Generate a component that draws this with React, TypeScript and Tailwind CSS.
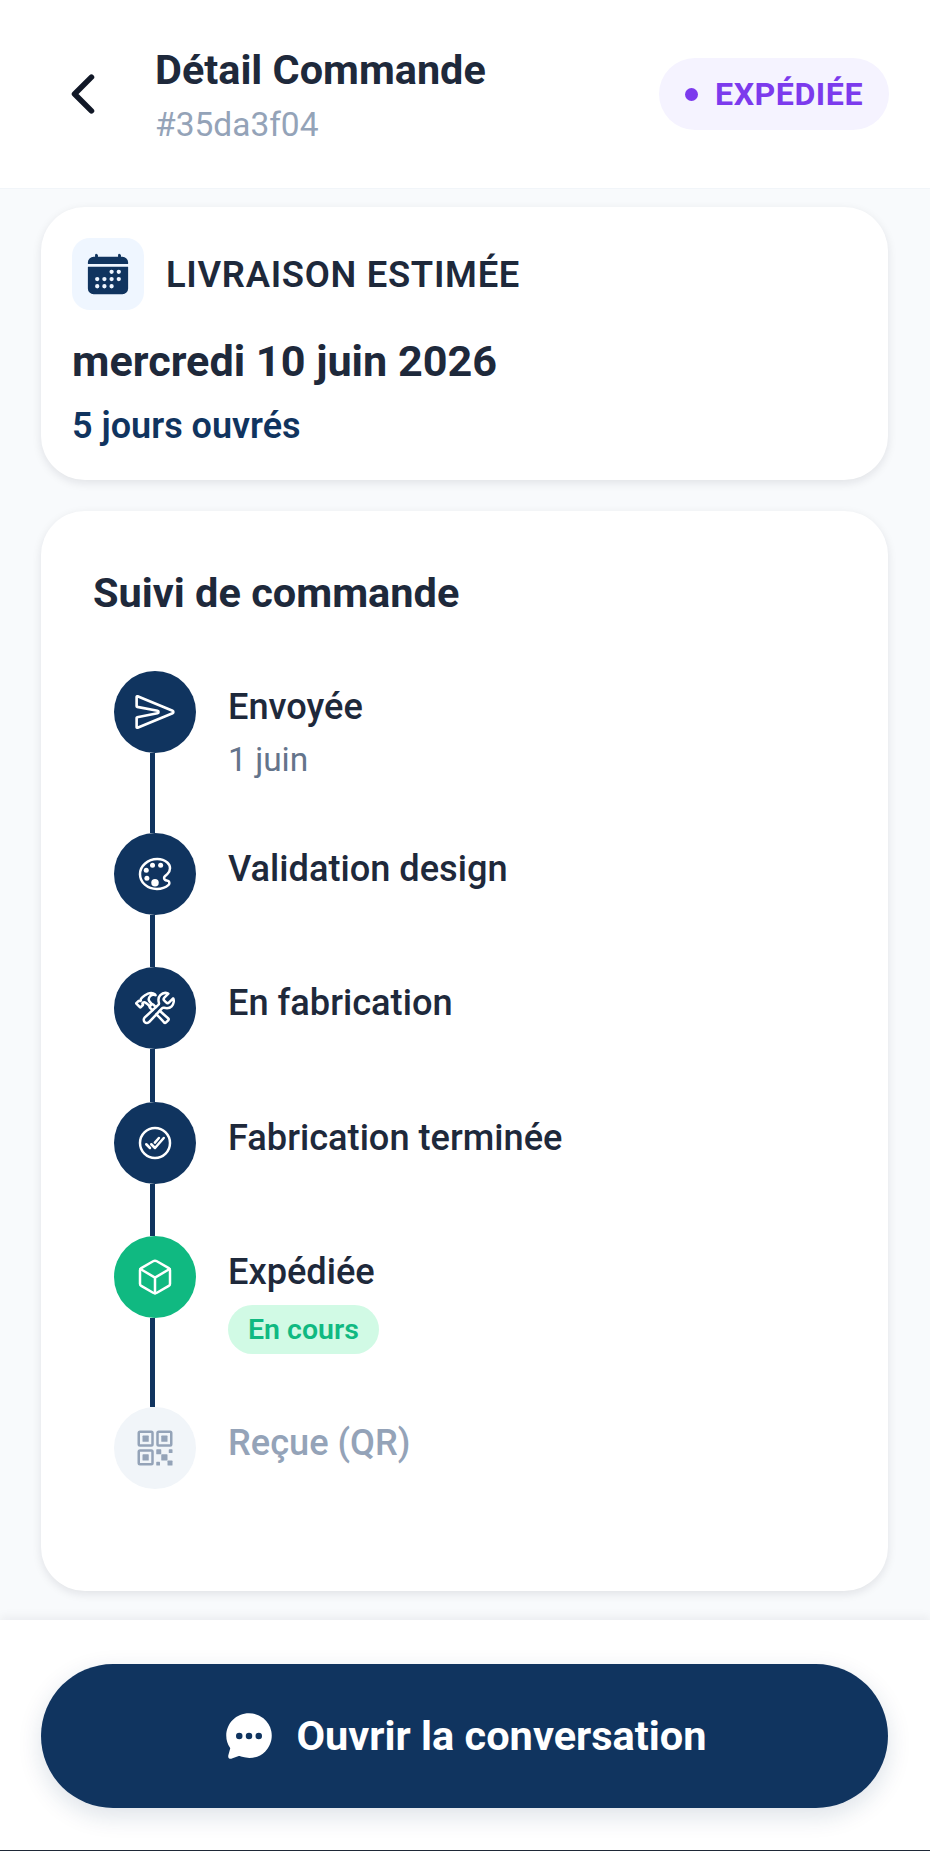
import type { ReactNode } from "react";
import {
  IoCalendar,
  IoChatbubbleEllipses,
  IoCheckmarkDoneCircleOutline,
  IoChevronBack,
  IoColorPaletteOutline,
  IoConstructOutline,
  IoCubeOutline,
  IoQrCodeOutline,
  IoSendOutline,
} from "react-icons/io5";

function Step({
  icon,
  title,
  circle = "bg-[#10345f] text-white",
  titleColor = "text-[#1e293b]",
  last = false,
  height,
  children,
}: {
  icon: ReactNode;
  title: string;
  circle?: string;
  titleColor?: string;
  last?: boolean;
  height: string;
  children?: ReactNode;
}) {
  return (
    <div className={`flex ${height}`}>
      <div className="flex w-[82px] shrink-0 flex-col items-center">
        <div
          className={`flex h-[82px] w-[82px] shrink-0 items-center justify-center rounded-full ${circle}`}
        >
          {icon}
        </div>
        {!last && <div className="mr-[5px] w-[5px] flex-1 bg-[#10345f]" />}
      </div>
      <div className="ml-[32px] pt-[16px]">
        <div className={`text-[36.2px] font-medium leading-[40px] ${titleColor}`}>
          {title}
        </div>
        {children}
      </div>
    </div>
  );
}

export default function App() {
  return (
    <div className="flex h-[1851px] w-[930px] flex-col overflow-hidden bg-[#f8fafc] font-['Roboto',sans-serif]">
      <header className="flex h-[189px] shrink-0 items-center border-b border-[#f1f5f9] bg-white pl-[60px] pr-[41px]">
        <IoChevronBack size={60} className="-ml-[7px] text-[#111827]" />
        <div className="ml-[42px] flex-1 pt-[2px]">
          <div className="text-[41.4px] font-bold leading-[48px] text-[#1e293b]">
            Détail Commande
          </div>
          <div className="mt-[11px] text-[33.5px] leading-[40px] text-[#94a3b8]">
            #35da3f04
          </div>
        </div>
        <div className="flex h-[72px] items-center gap-[17px] rounded-full bg-[#f5f3ff] px-[26px]">
          <span className="h-[13px] w-[13px] rounded-full bg-[#7c3aed]" />
          <span className="text-[32.2px] font-bold tracking-[0.5px] text-[#7c3aed]">
            EXPÉDIÉE
          </span>
        </div>
      </header>

      <main className="flex flex-1 flex-col pl-[41px] pr-[42px] pt-[18px]">
        <section className="h-[273px] rounded-[44px] bg-white px-[31px] pt-[31px] shadow-[0_3px_10px_rgba(15,23,42,0.1)]">
          <div className="flex items-center">
            <div className="flex h-[72px] w-[72px] items-center justify-center rounded-[18px] bg-[#eff6ff]">
              <IoCalendar size={46} className="text-[#10345f]" />
            </div>
            <span className="ml-[22px] pt-[2px] text-[36.4px] font-semibold tracking-[0.7px] text-[#1e293b]">
              LIVRAISON ESTIMÉE
            </span>
          </div>
          <div className="mt-[27px] text-[43.2px] font-bold leading-[50px] text-[#1e293b]">
            mercredi 10 juin 2026
          </div>
          <div className="mt-[19px] text-[36px] font-semibold leading-[40px] text-[#10345f]">
            5 jours ouvrés
          </div>
        </section>

        <section className="mt-[31px] h-[1080px] rounded-[44px] bg-white pl-[73px] pt-[58px] shadow-[0_3px_10px_rgba(15,23,42,0.1)]">
          <h2 className="-ml-[21px] text-[41.5px] font-bold leading-[48px] text-[#1e293b]">
            Suivi de commande
          </h2>
          <div className="mt-[54px]">
            <Step
              height="h-[162px]"
              title="Envoyée"
              icon={<IoSendOutline size={42} />}
            >
              <div className="mt-[13px] text-[33.5px] leading-[40px] text-[#64748b]">
                1 juin
              </div>
            </Step>
            <Step
              height="h-[134px]"
              title="Validation design"
              icon={<IoColorPaletteOutline size={40} />}
            />
            <Step
              height="h-[135px]"
              title="En fabrication"
              icon={<IoConstructOutline size={40} />}
            />
            <Step
              height="h-[134px]"
              title="Fabrication terminée"
              icon={<IoCheckmarkDoneCircleOutline size={40} />}
            />
            <Step
              height="h-[171px]"
              title="Expédiée"
              circle="bg-[#10b981] text-white"
              icon={<IoCubeOutline size={40} />}
            >
              <div className="mt-[13px] inline-flex h-[49px] items-center rounded-full bg-[#d1fae5] px-[20px] pt-[2px] text-[28.5px] font-semibold text-[#10b981]">
                En cours
              </div>
            </Step>
            <Step
              last
              height="h-[82px]"
              title="Reçue (QR)"
              circle="bg-[#f1f5f9] text-[#94a3b8]"
              titleColor="text-[#94a3b8]"
              icon={<IoQrCodeOutline size={40} />}
            />
          </div>
        </section>
      </main>

      <footer className="flex h-[231px] shrink-0 flex-col bg-white pl-[41px] pr-[42px] pt-[44px] shadow-[0_-3px_10px_rgba(15,23,42,0.06)]">
        <button className="flex h-[144px] w-full items-center justify-center gap-[22px] rounded-[72px] bg-[#10345f] text-[41.5px] font-bold text-white shadow-[0_8px_24px_rgba(16,52,95,0.14)]">
          <IoChatbubbleEllipses size={52} />
          Ouvrir la conversation
        </button>
        <div className="-ml-[41px] -mr-[42px] mt-auto h-px bg-[#1f2937]" />
      </footer>
    </div>
  );
}
